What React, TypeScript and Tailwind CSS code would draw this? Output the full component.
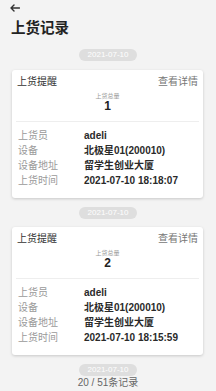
import React from "react";

const font = { fontFamily: '"Liberation Sans", "Noto Sans CJK SC", sans-serif' };

type Rec = { qty: string; time: string };

const records: Rec[] = [
  { qty: "1", time: "2021-07-10 18:18:07" },
  { qty: "2", time: "2021-07-10 18:15:59" },
];

function Pill() {
  return (
    <div className="flex justify-center">
      <div className="h-[12px] w-[58px] rounded-full bg-[#dedede] text-white text-[8px] leading-[12px] text-center">
        2021-07-10
      </div>
    </div>
  );
}

function Row({ label, value }: { label: string; value: string }) {
  return (
    <div className="flex h-[15px] items-center text-[10px]">
      <div className="w-[66px] text-[#9a9a9a]">{label}</div>
      <div className="font-bold text-[#2a2a2a]">{value}</div>
    </div>
  );
}

function Card({ r }: { r: Rec }) {
  return (
    <div className="mx-[12px] w-[191px] rounded-[3px] bg-white shadow-[0_1px_3px_rgba(0,0,0,0.18)]">
      <div className="flex h-[22px] items-center justify-between px-[5px] text-[10px]">
        <span className="text-[#333]">上货提醒</span>
        <span className="text-[#777]">查看详情</span>
      </div>
      <div className="text-center text-[6px] leading-[8px] text-[#999]">上货总量</div>
      <div className="text-center text-[12px] font-bold leading-[12px] text-[#222]">{r.qty}</div>
      <div className="mx-[4px] mt-[9px] h-px bg-[#eeeeee]" />
      <div className="px-[6px] pt-[6px] pb-[10px]">
        <Row label="上货员" value="adeli" />
        <Row label="设备" value="北极星01(200010)" />
        <Row label="设备地址" value="留学生创业大厦" />
        <Row label="上货时间" value={r.time} />
      </div>
    </div>
  );
}

export default function App() {
  return (
    <div className="h-[391px] w-[216px] overflow-hidden bg-[#f3f3f3]" style={font}>
      <div className="h-[16px] pl-[10px] pt-[4px]">
        <svg width="10" height="8" viewBox="0 0 10 8" fill="none">
          <path d="M9.5 4H1M4 1L1 4l3 3" stroke="#333" strokeWidth="1.4" strokeLinecap="round" strokeLinejoin="round" />
        </svg>
      </div>
      <div className="h-[25px] pl-[11px] text-[14.5px] font-bold leading-[25px] text-[#222]">上货记录</div>
      <div className="pt-[8px]">
        <Pill />
      </div>
      <div className="mt-[9px]">
        <Card r={records[0]} />
      </div>
      <div className="mt-[9px]">
        <Pill />
      </div>
      <div className="mt-[8px]">
        <Card r={records[1]} />
      </div>
      <div className="mt-[9px]">
        <Pill />
      </div>
      <div className="mt-[1px] text-center text-[10px] leading-[11px] text-[#666]">20 / 51条记录</div>
    </div>
  );
}
